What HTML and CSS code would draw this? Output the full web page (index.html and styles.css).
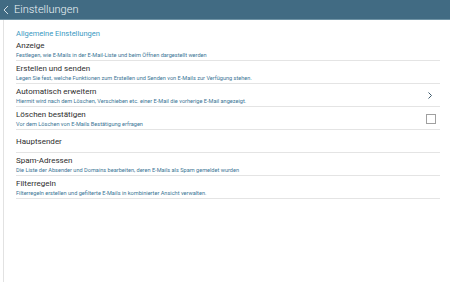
FILE: index.html
```html
<!DOCTYPE html>
<html lang="de">
<head>
    <meta charset="UTF-8">
    <meta name="viewport" content="width=device-width, initial-scale=1.0">
    <title>Einstellungen</title>
    <link rel="stylesheet" href="styles.css">
</head>
<body>

    <header class="kopf">
        <svg class="zurueck" width="6" height="10" viewBox="0 0 6 10">
            <path d="M5 1 L1 5 L5 9" fill="none" stroke="#e6eef2" stroke-width="0.9"/>
        </svg>
        <span class="titel">Einstellungen</span>
    </header>

    <main class="inhalt">
        <div class="liste">
            <h2 class="abschnitt">Allgemeine Einstellungen</h2>

            <div class="eintrag">
                <div class="texte">
                    <div class="name">Anzeige</div>
                    <div class="info">Festlegen, wie E-Mails in der E-Mail-Liste und beim Öffnen dargestellt werden</div>
                </div>
            </div>

            <div class="eintrag">
                <div class="texte">
                    <div class="name">Erstellen und senden</div>
                    <div class="info">Legen Sie fest, welche Funktionen zum Erstellen und Senden von E-Mails zur Verfügung stehen.</div>
                </div>
            </div>

            <div class="eintrag">
                <div class="texte">
                    <div class="name">Automatisch erweitern</div>
                    <div class="info">Hiermit wird nach dem Löschen, Verschieben etc. einer E-Mail die vorherige E-Mail angezeigt.</div>
                </div>
                <svg class="pfeil" width="6" height="9" viewBox="0 0 6 9">
                    <path d="M1.5 1.5 L4.5 4.5 L1.5 7.5" fill="none" stroke="#3f5a6c" stroke-width="1"/>
                </svg>
            </div>

            <div class="eintrag">
                <div class="texte">
                    <div class="name">Löschen bestätigen</div>
                    <div class="info">Vor dem Löschen von E-Mails Bestätigung erfragen</div>
                </div>
                <span class="kasten"></span>
            </div>

            <div class="eintrag einzeilig">
                <div class="texte">
                    <div class="name">Hauptsender</div>
                </div>
            </div>

            <div class="eintrag">
                <div class="texte">
                    <div class="name">Spam-Adressen</div>
                    <div class="info">Die Liste der Absender und Domains bearbeiten, deren E-Mails als Spam gemeldet wurden</div>
                </div>
            </div>

            <div class="eintrag">
                <div class="texte">
                    <div class="name">Filterregeln</div>
                    <div class="info">Filterregeln erstellen und gefilterte E-Mails in kombinierter Ansicht verwalten.</div>
                </div>
            </div>
        </div>
    </main>

</body>
</html>
```

FILE: styles.css
```css
* {
    margin: 0;
    padding: 0;
    box-sizing: border-box;
}

body {
    width: 450px;
    height: 282px;
    overflow: hidden;
    background: #fff;
    font-family: Roboto, 'Noto Sans', sans-serif;
    display: flex;
    flex-direction: column;
}

/* Kopfleiste */
.kopf {
    height: 20px;
    background: #416b83;
    border-bottom: 1px solid #6f93a5;
    display: flex;
    align-items: center;
    padding-left: 3px;
    gap: 5px;
}

.titel {
    color: #eef4f7;
    font-size: 11px;
    font-weight: 300;
    line-height: 19px;
}

.inhalt {
    flex: 1;
    margin-left: 3px;
    border-left: 1px solid #e2e2e2;
    padding-left: 12px;
    padding-right: 10px;
}

.abschnitt {
    color: #3a99c2;
    font-size: 7.5px;
    font-weight: 400;
    line-height: 9px;
    padding-top: 9px;
}

.eintrag {
    display: flex;
    align-items: center;
    justify-content: space-between;
    height: 23px;
    border-bottom: 1px solid #e4e4e4;
    padding-top: 1px;
}

.name {
    color: #2e2e2e;
    font-size: 8px;
    font-weight: 400;
    line-height: 10px;
}

.info {
    color: #3a7595;
    font-size: 5.6px;
    font-weight: 400;
    line-height: 8px;
}

.pfeil {
    margin-right: 7px;
}

/* Kontrollkästchen */
.kasten {
    width: 10px;
    height: 10px;
    border: 1px solid #a0a0a0;
    margin-right: 4px;
}
```
